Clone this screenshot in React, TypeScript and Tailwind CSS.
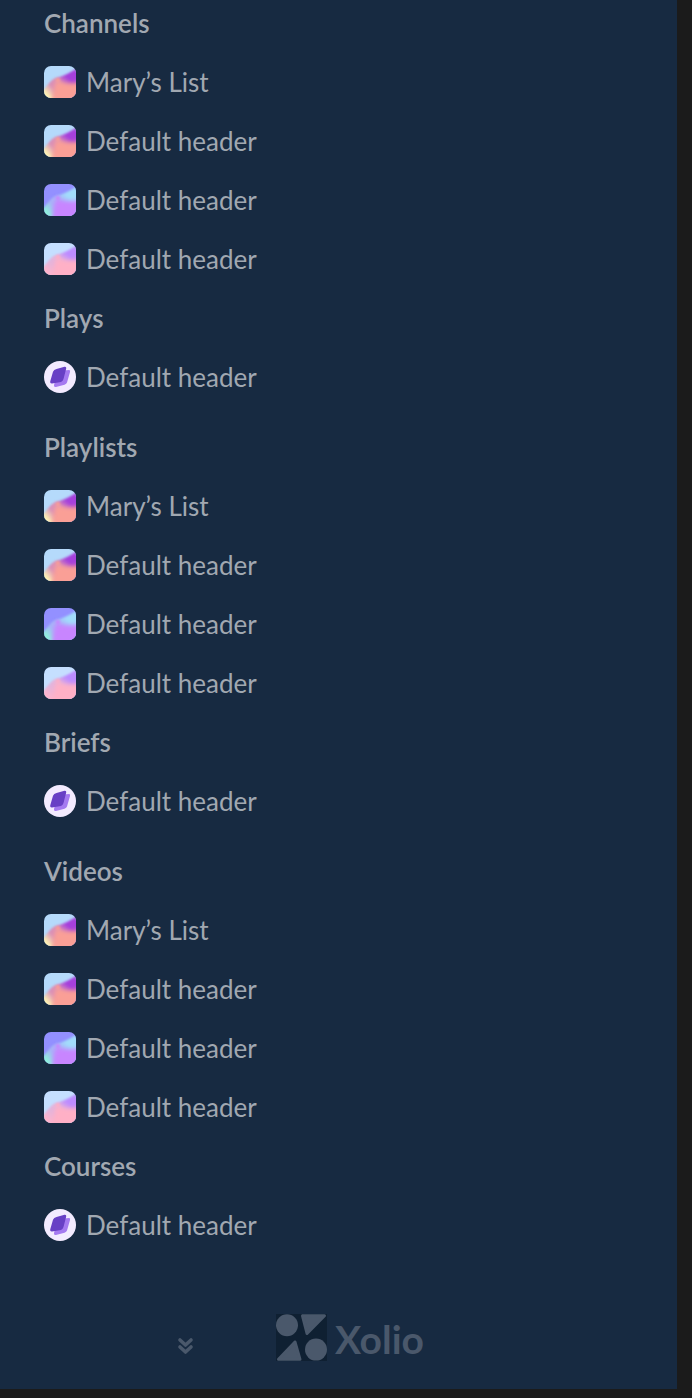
import { useId } from "react";

type IconKind = "sunset" | "violet" | "blush" | "leaf";

interface ListEntry {
  label: string;
  icon: IconKind;
}

interface Section {
  title: string;
  entries: ListEntry[];
}

const LIST_ENTRIES: ListEntry[] = [
  { label: "Mary’s List", icon: "sunset" },
  { label: "Default header", icon: "sunset" },
  { label: "Default header", icon: "violet" },
  { label: "Default header", icon: "blush" },
];

const SINGLE_ENTRY: ListEntry[] = [{ label: "Default header", icon: "leaf" }];

// Each group pairs a list section with a single-entry section
const GROUPS: Section[][] = [
  [
    { title: "Channels", entries: LIST_ENTRIES },
    { title: "Plays", entries: SINGLE_ENTRY },
  ],
  [
    { title: "Playlists", entries: LIST_ENTRIES },
    { title: "Briefs", entries: SINGLE_ENTRY },
  ],
  [
    { title: "Videos", entries: LIST_ENTRIES },
    { title: "Courses", entries: SINGLE_ENTRY },
  ],
];

const PALETTES = {
  sunset: { sky: "#b5dafb", wave: "#a63fdc", body: "#fa9f96", corner: "#fdf0b4", haze: "#d98fb8" },
  violet: { sky: "#9390ff", wave: "#a2dcfb", body: "#c885ff", corner: "#8ff0dc", haze: "#a8b4f8" },
  blush: { sky: "#c5dfff", wave: "#bd8cff", body: "#ffb0c6", corner: "#ffb4cc", haze: "#e3b4dc" },
};

function SwirlIcon({ kind }: { kind: keyof typeof PALETTES }): JSX.Element {
  const id = useId();
  const c = PALETTES[kind];
  return (
    <svg viewBox="0 0 32 32" className="size-8 shrink-0" aria-hidden="true">
      <defs>
        <clipPath id={`${id}-clip`}>
          <rect width="32" height="32" rx="7" />
        </clipPath>
        <filter id={`${id}-soft`} x="-50%" y="-50%" width="200%" height="200%">
          <feGaussianBlur stdDeviation="1.2" />
        </filter>
        <filter id={`${id}-wide`} x="-50%" y="-50%" width="200%" height="200%">
          <feGaussianBlur stdDeviation="2.2" />
        </filter>
        <linearGradient id={`${id}-wave`} x1="2" y1="30" x2="25" y2="8" gradientUnits="userSpaceOnUse">
          <stop offset="0.05" stopColor={c.corner} />
          <stop offset="0.35" stopColor={c.haze} />
          <stop offset="0.6" stopColor={c.haze} />
          <stop offset="0.9" stopColor={c.wave} />
        </linearGradient>
      </defs>
      <g clipPath={`url(#${id}-clip)`}>
        <rect width="32" height="32" fill={c.sky} />
        <path d="M-6 30C2 23 5 14 13 11.500C20 10.500 27 6 37 0V40H-6Z" fill={`url(#${id}-wave)`} filter={`url(#${id}-soft)`} />
        <path d="M6 42C9 32 9 20 13 14C17 17 24 19 40 15V42Z" fill={c.body} filter={`url(#${id}-wide)`} />
        <circle cx="14" cy="14" r="2" fill={c.body} filter={`url(#${id}-soft)`} />
      </g>
    </svg>
  );
}

function LeafIcon(): JSX.Element {
  return (
    <svg viewBox="0 0 32 32" className="size-8 shrink-0" aria-hidden="true">
      <circle cx="16" cy="16" r="16" fill="#f3ebff" />
      <path
        d="M14 10L25 9Q26.600 9 26 11L23 21.500Q22.500 23 20.500 23.700L12 26Q9.500 26.400 10 24Z"
        fill="#a57af0"
      />
      <path
        d="M12.500 8L20.500 5.800Q22.600 5.500 22.200 7.500L19.500 18Q19 20.200 17 20.900L8 22.400Q5.800 22.600 6.200 20.500L9 10.800Q9.800 8.700 12.500 8Z"
        fill="#6840c5"
      />
    </svg>
  );
}

function SectionBlock({ title, entries }: Section): JSX.Element {
  return (
    <section className="flex flex-col gap-[27px]">
      <h2 className="text-[26px] leading-8 font-semibold">{title}</h2>
      <ul className="flex flex-col gap-[27px]">
        {entries.map((entry, i) => (
          <li key={i}>
            <a href="#" className="flex items-center gap-[10px] text-[26px] leading-8">
              {entry.icon === "leaf" ? <LeafIcon /> : <SwirlIcon kind={entry.icon} />}
              <span>{entry.label}</span>
            </a>
          </li>
        ))}
      </ul>
    </section>
  );
}

function XolioMark(): JSX.Element {
  return (
    <svg viewBox="0 0 51 47" className="h-[47px] w-[51px]" aria-hidden="true">
      <rect width="51" height="47" fill="#0f2032" />
      <g fill="#4a586b" stroke="#4a586b" strokeLinejoin="round">
        <circle cx="11" cy="11.300" r="11" stroke="none" />
        <circle cx="40" cy="35.600" r="11" stroke="none" />
        <path d="M26.500 1.800H48.500L31 19.500Z" strokeWidth="3" />
        <path d="M2.500 45.300H24L19 28Z" strokeWidth="3" />
      </g>
    </svg>
  );
}

export default function App(): JSX.Element {
  return (
    <div className="min-h-screen bg-[#1b1b1b] pr-[15px] pb-[9px] font-['Lato',sans-serif]">
      <div className="bg-[#172a41] pt-[7px] pb-[27px] text-[#a1a8b1]">
        <nav className="flex flex-col gap-[38px] px-11">
          {GROUPS.map((group) => (
            <div key={group[0].title} className="flex flex-col gap-[27px]">
              {group.map((section) => (
                <SectionBlock key={section.title} {...section} />
              ))}
            </div>
          ))}
        </nav>
        <footer className="mt-[72px] flex items-center pl-44 text-[#4a586b]">
          <button type="button" aria-label="Show more" className="mt-4">
            <svg
              viewBox="0 0 18 18"
              className="size-[18px]"
              fill="none"
              stroke="currentColor"
              strokeWidth="3.6"
              strokeLinecap="round"
              strokeLinejoin="round"
            >
              <path d="M4 3L9.500 8L15 3M4 10L9.500 15L15 10" />
            </svg>
          </button>
          <div className="ml-[82px] flex items-center gap-2">
            <XolioMark />
            <span className="pt-1 text-[39px] leading-[45px] font-bold">Xolio</span>
          </div>
        </footer>
      </div>
    </div>
  );
}
